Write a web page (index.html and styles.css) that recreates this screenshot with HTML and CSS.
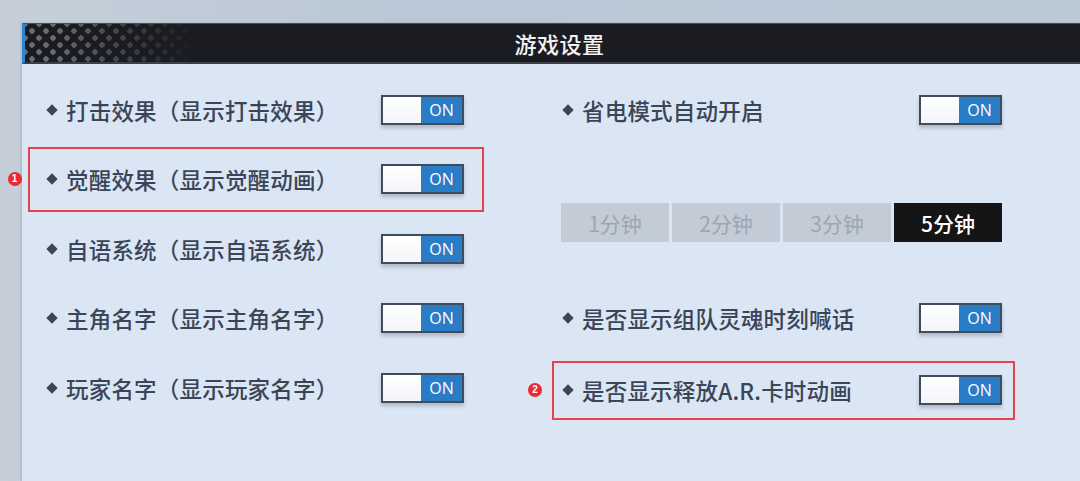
FILE: index.html
```html
<!DOCTYPE html>
<html lang="zh-CN">
<head>
    <meta charset="UTF-8">
    <title>游戏设置</title>
    <link rel="stylesheet" href="styles.css">
</head>
<body>

<div class="panel">
    <div class="head">
        <div class="dots"></div>
        <h1>游戏设置</h1>
    </div>

    <div class="content">
        <div class="col left">
            <div class="row">
                <span class="label">打击效果（显示打击效果）</span>
                <span class="toggle"><i></i><b>ON</b></span>
            </div>
            <div class="row mark">
                <span class="badge">1</span>
                <span class="label">觉醒效果（显示觉醒动画）</span>
                <span class="toggle"><i></i><b>ON</b></span>
            </div>
            <div class="row">
                <span class="label">自语系统（显示自语系统）</span>
                <span class="toggle"><i></i><b>ON</b></span>
            </div>
            <div class="row">
                <span class="label">主角名字（显示主角名字）</span>
                <span class="toggle"><i></i><b>ON</b></span>
            </div>
            <div class="row">
                <span class="label">玩家名字（显示玩家名字）</span>
                <span class="toggle"><i></i><b>ON</b></span>
            </div>
        </div>

        <div class="col right">
            <div class="row">
                <span class="label">省电模式自动开启</span>
                <span class="toggle"><i></i><b>ON</b></span>
            </div>
            <div class="times">
                <span>1分钟</span>
                <span>2分钟</span>
                <span>3分钟</span>
                <span class="on">5分钟</span>
            </div>
            <div class="row">
                <span class="label">是否显示组队灵魂时刻喊话</span>
                <span class="toggle"><i></i><b>ON</b></span>
            </div>
            <div class="row mark">
                <span class="badge">2</span>
                <span class="label">是否显示释放A.R.卡时动画</span>
                <span class="toggle"><i></i><b>ON</b></span>
            </div>
        </div>
    </div>
</div>

</body>
</html>
```

FILE: styles.css
```css
*, *::before, *::after {
  padding: 0;
  margin: 0;
  box-sizing: border-box;
}

body {
  width: 1080px;
  height: 481px;
  overflow: hidden;
  background: linear-gradient(90deg, #c6cfd9, #b9c7d6 40%, #bccad8);
  font-family: "Noto Sans CJK SC", "Noto Sans", sans-serif;
  color: #3a4557;
}

.panel {
  margin: 23px 0 0 22px;
  height: 458px;
  background: #dbe6f4;
  box-shadow: -1px 0 2px #0002;
}

.head {
  position: relative;
  height: 41px;
  background: #1b1c21;
  border-top: 1px solid #4a4d55;
  border-bottom: 2px solid #3d4048;
  border-left: 3px solid #2f86d0;
  display: flex;
  align-items: center;
  justify-content: center;

  h1 {
    position: relative;
    font-size: 22px;
    font-weight: 500;
    color: #f2f2f2;
    letter-spacing: 0.5px;
    margin-left: 14px;
  }
}

/* halftone corner */
.dots {
  position: absolute;
  left: 0; top: 0; bottom: 0;
  width: 180px;
  background-image:
    radial-gradient(circle, #6a6c72 2.5px, transparent 3px),
    radial-gradient(circle, #6a6c72 2.5px, transparent 3px);
  background-size: 14px 14px;
  background-position: 0 0, 7px 7px;
  -webkit-mask-image: linear-gradient(90deg, #000 15%, #0009 45%, transparent 95%);
  mask-image: linear-gradient(90deg, #000 15%, #0009 45%, transparent 95%);
}

.content {
  display: grid;
  grid-template-columns: 456px 463px;
  column-gap: 68px;
  padding: 11px 0 0 6px;
}

.col {
  display: grid;
  grid-auto-rows: 69.5px;
}

.row {
  position: relative;
  align-self: center;
  height: 65px;
  display: flex;
  align-items: center;
  justify-content: space-between;
  border: 2px solid transparent;
  padding: 0 18px 0 18px;
}

.left .row.mark { border-color: #e5434d; }

.label {
  display: flex;
  align-items: center;
  font-size: 22.5px;
  font-weight: 500;
  letter-spacing: 0.2px;
  line-height: 1;

  &::before {
    content: '';
    width: 8px; height: 8px;
    background: #3a4557;
    rotate: 45deg;
    margin-right: 10px;
  }
}

.toggle {
  display: flex;
  width: 83px;
  height: 30px;
  border: 2px solid #3f4c5c;
  box-shadow: 0 3px 4px #0003;

  i {
    flex: 1;
    background: linear-gradient(#fff, #f3f5f8);
  }
  b {
    width: 41px;
    background: #2b7cc6;
    color: #fff;
    font-family: "Open Sans", "Liberation Sans", sans-serif;
    font-size: 16px;
    font-weight: 500;
    display: grid;
    place-items: center;
    line-height: 1;
  }
}

.right {
  .row {
    padding: 0 11px 0 10px;
  }
  .row.mark {
    height: 59px;
    margin-top: 5px;
    border-color: #e5434d;
  }
}

.times {
  grid-row: span 2;
  align-self: start;
  margin: 58.5px 0 0 9px;
  display: flex;
  gap: 3px;

  span {
    width: 108px;
    height: 39px;
    display: grid;
    place-items: center;
    background: #c3cbd6;
    color: #9ca6b2;
    font-size: 21px;
    font-weight: 400;
  }
  .on {
    background: #151515;
    color: #fff;
    font-weight: 500;
  }
}

.badge {
  position: absolute;
  top: 50%;
  translate: 0 -50%;
  left: -22.5px;
  width: 14px;
  height: 14px;
  border-radius: 50%;
  background: #ec2830;
  color: #fff;
  font-family: "Liberation Sans", sans-serif;
  font-size: 10px;
  font-weight: 700;
  display: grid;
  place-items: center;
  line-height: 1;
}

.right .badge { left: -26px; }
```
